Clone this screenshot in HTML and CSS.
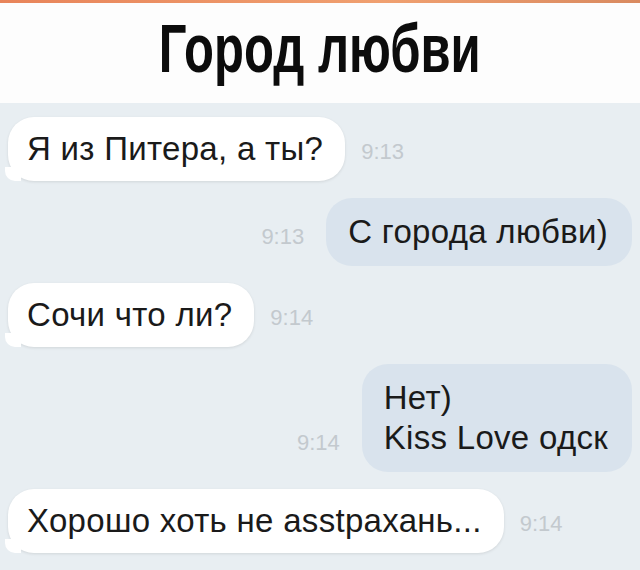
FILE: index.html
```html
<!DOCTYPE html>
<html lang="ru">
  <head>
    <meta charset="UTF-8" />
    <meta name="viewport" content="width=device-width, initial-scale=1.0" />
    <title>Город любви</title>
    <link rel="stylesheet" href="styles.css">
  </head>
  <body class="page">
    <div class="top-strip"></div>
    <header class="header">
      <h1 class="title"><span>Город любви</span></h1>
    </header>

    <main class="chat">
      <div class="row in">
        <div class="bubble">Я из Питера, а ты?</div>
        <span class="time">9:13</span>
      </div>

      <div class="row out">
        <span class="time">9:13</span>
        <div class="bubble">С города любви)</div>
      </div>

      <div class="row in">
        <div class="bubble">Сочи что ли?</div>
        <span class="time">9:14</span>
      </div>

      <div class="row out">
        <span class="time">9:14</span>
        <div class="bubble">Нет)<br>Kiss Love одск</div>
      </div>

      <div class="row in">
        <div class="bubble">Хорошо хоть не asstрахань...</div>
        <span class="time">9:14</span>
      </div>
    </main>
  </body>
</html>
```

FILE: styles.css
```css
.page {
  margin: 0;
  width: 640px;
  height: 570px;
  overflow: hidden;
  background-color: #e8eef2;
  font-family: "Liberation Sans", Arial, sans-serif;
}

.top-strip {
  height: 3px;
  background: linear-gradient(to right, #e8845a, #f0a070 60%, #d98a60);
}

.header {
  height: 100px;
  box-sizing: border-box;
  padding-bottom: 10px;
  background-color: #fdfdfd;
  display: flex;
  align-items: center;
  justify-content: center;
}

.title {
  margin: 0;
  font-size: 69px;
  font-weight: bold;
  color: #0c0c0c;
  line-height: 1;
}

.title span {
  display: inline-block;
  transform: scaleX(0.71);
}

.chat {
  display: flex;
  flex-direction: column;
  gap: 17px;
  padding: 14px 8px 0 8px;
}

.row {
  display: flex;
  align-items: flex-end;
}

.row.in {
  justify-content: flex-start;
  gap: 16px;
}

.row.out {
  justify-content: flex-end;
  gap: 22px;
}

.bubble {
  position: relative;
  font-size: 33px;
  letter-spacing: 0.3px;
  line-height: 40px;
  color: #1a1a1a;
  padding: 12px 22px 12px 19px;
  border-radius: 26px;
}

.in .bubble {
  background-color: #ffffff;
  box-shadow: 0 1px 3px rgba(0, 0, 0, 0.1);
}

.in .bubble::before {
  content: "";
  position: absolute;
  left: -3px;
  bottom: 0;
  width: 16px;
  height: 14px;
  background-color: #ffffff;
  border-bottom-left-radius: 10px;
}

.out .bubble {
  padding: 14px 24px 14px 22px;
  background-color: #d9e3ed;
}

.time {
  font-size: 22px;
  line-height: 1;
  color: #c3c9ce;
  margin-bottom: 18px;
}
```
